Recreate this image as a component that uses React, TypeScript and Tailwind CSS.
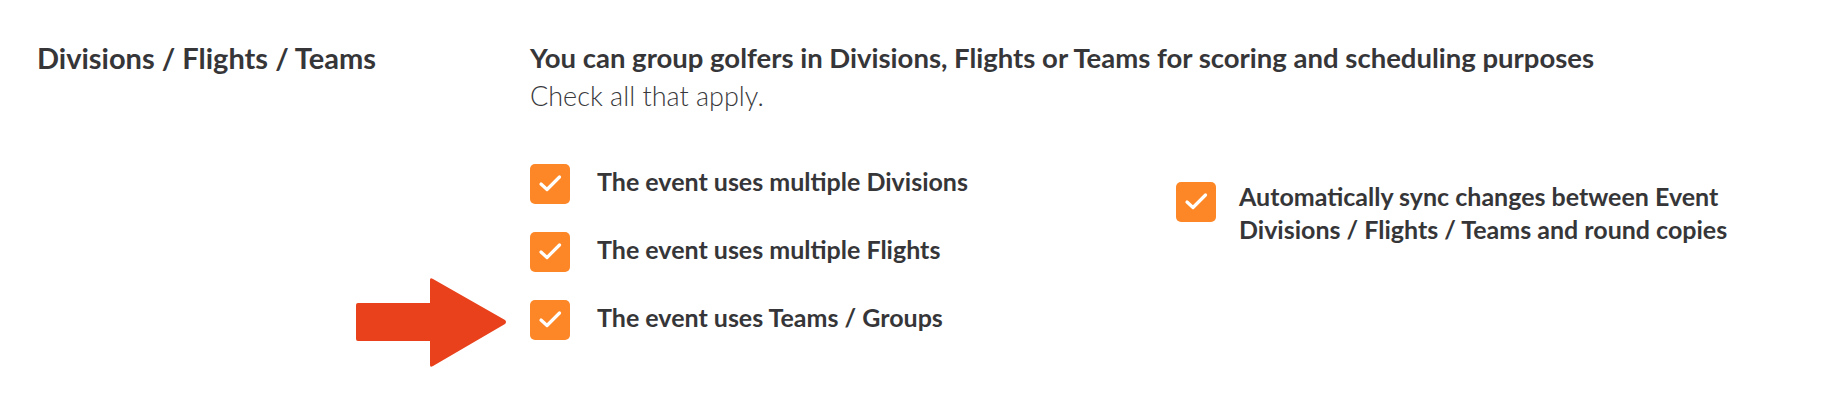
import { useState } from 'react';

const font = { fontFamily: 'Lato, "Open Sans", sans-serif' };

function CheckBox({ checked, onToggle }: { checked: boolean; onToggle: () => void }) {
  return (
    <button
      type="button"
      onClick={onToggle}
      className={`flex h-10 w-10 shrink-0 items-center justify-center rounded-[5px] ${
        checked ? 'bg-[#fd8727]' : 'border-2 border-[#d1d1d1] bg-white'
      }`}
    >
      {checked && (
        <svg width="40" height="40" viewBox="0 0 40 40" fill="none">
          <polyline
            points="11,20 17,25.5 29.5,13"
            stroke="white"
            strokeWidth="3.2"
            strokeLinecap="round"
            strokeLinejoin="round"
          />
        </svg>
      )}
    </button>
  );
}

function Arrow() {
  return (
    <svg
      className="absolute left-[-174px] top-[-23px]"
      width="152"
      height="92"
      viewBox="0 0 152 92"
    >
      <path
        d="M2 26 H74 V3 Q74 0 77 2 L149 43 Q151 45 149 47 L77 89 Q74 91 74 88 V64 H2 Q0 64 0 62 V28 Q0 26 2 26 Z"
        fill="#e8411b"
      />
    </svg>
  );
}

export default function App() {
  const [opts, setOpts] = useState({
    divisions: true,
    flights: true,
    teams: true,
    sync: true,
  });

  const toggle = (k: keyof typeof opts) => setOpts((o) => ({ ...o, [k]: !o[k] }));

  const items: { key: keyof typeof opts; label: string }[] = [
    { key: 'divisions', label: 'The event uses multiple Divisions' },
    { key: 'flights', label: 'The event uses multiple Flights' },
    { key: 'teams', label: 'The event uses Teams / Groups' },
  ];

  return (
    <div className="h-[406px] w-full bg-white text-[#363639]" style={font}>
      <div className="flex pl-[37px] pt-[44px]">
        <h2 className="w-[493px] shrink-0 text-[29px] font-bold leading-[28px]">
          Divisions / Flights / Teams
        </h2>

        <div className="flex flex-col">
          <p className="text-[27.5px] font-bold leading-[28px]">
            You can group golfers in Divisions, Flights or Teams for scoring and scheduling purposes
          </p>
          <p className="mt-[10px] text-[27px] font-light leading-[28px] text-[#39393c]">
            Check all that apply.
          </p>

          <div className="mt-[54px] flex">
            <div className="flex w-[646px] flex-col gap-[28px]">
              {items.map((it) => (
                <div key={it.key} className="relative flex h-10 items-center gap-[27px]">
                  {it.key === 'teams' && <Arrow />}
                  <CheckBox checked={opts[it.key]} onToggle={() => toggle(it.key)} />
                  <span className="pb-[6px] text-[25px] font-bold leading-[32px]">{it.label}</span>
                </div>
              ))}
            </div>

            <div className="mt-[18px] flex items-start gap-[23px]">
              <CheckBox checked={opts.sync} onToggle={() => toggle('sync')} />
              <span className="-mt-[2px] text-[25px] font-bold leading-[33px]">
                Automatically sync changes between Event
                <br />
                Divisions / Flights / Teams and round copies
              </span>
            </div>
          </div>
        </div>
      </div>
    </div>
  );
}
